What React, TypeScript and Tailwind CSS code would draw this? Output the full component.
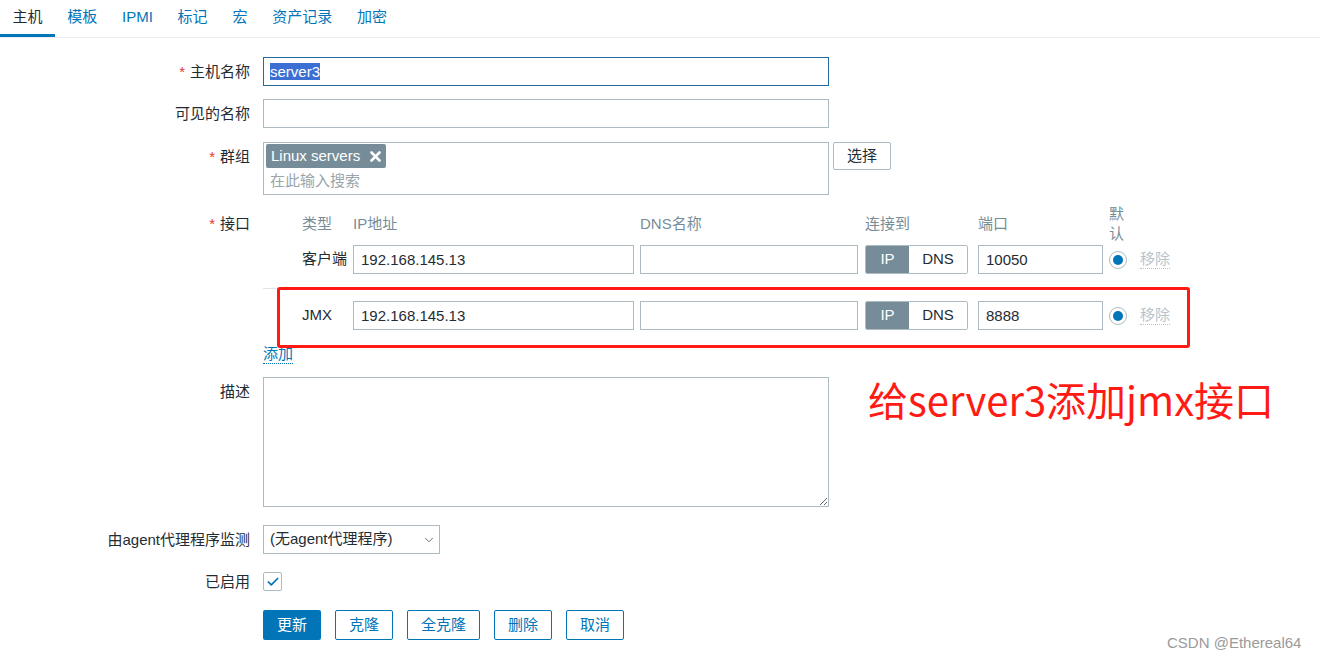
import { Check, ChevronDown } from "lucide-react";

const tabs = ["主机", "模板", "IPMI", "标记", "宏", "资产记录", "加密"];

const font = "font-['Liberation_Sans','Noto_Sans_CJK_SC',sans-serif]";

function Label({
  text,
  required,
  className = "",
  lead = "leading-[29px]",
}: {
  text: string;
  required?: boolean;
  className?: string;
  lead?: string;
}) {
  return (
    <div className={`w-[250px] shrink-0 text-right text-[#1f2c33] ${lead} ${className}`}>
      {required && <span className="text-[#e33734] mr-[5px]">*</span>}
      {text}
    </div>
  );
}

function Field({ value, className = "" }: { value?: string; className?: string }) {
  return (
    <div
      className={`h-[29px] border border-[#acbbc2] bg-white px-[7px] leading-[27px] text-[#1f2c33] whitespace-nowrap overflow-hidden ${className}`}
    >
      {value}
    </div>
  );
}

function InterfaceRow({ type, ip, port }: { type: string; ip: string; port: string }) {
  return (
    <div className="flex items-center h-[29px] pl-[39px]">
      <div className="w-[51px] shrink-0 text-[#1f2c33]">{type}</div>
      <Field value={ip} className="w-[281px]" />
      <Field className="w-[218px] ml-[6px]" />
      <div className="ml-[7px] flex h-[29px] w-[103px] rounded-[2px] border border-[#acbbc2] overflow-hidden">
        <div className="w-[43px] bg-[#768d99] text-white flex items-center justify-center">IP</div>
        <div className="flex-1 bg-white text-[#1f2c33] flex items-center justify-center">DNS</div>
      </div>
      <Field value={port} className="w-[125px] ml-[10px]" />
      <div className="ml-[6px] w-[18px] h-[18px] rounded-full border border-[#acbbc2] flex items-center justify-center">
        <div className="w-[10px] h-[10px] rounded-full bg-[#0275b8]" />
      </div>
      <span className="ml-[13px] text-[#b8c4ca] border-b border-dotted border-[#b8c4ca] leading-[18px]">移除</span>
    </div>
  );
}

export default function App() {
  return (
    <div className={`relative w-[1320px] h-[657px] overflow-hidden bg-white text-[15px] ${font}`}>
      {/* tabs */}
      <div className="flex h-[38px] border-b border-[#ebeef0]">
        {tabs.map((t, i) => (
          <div
            key={t}
            className={`h-full px-[12.4px] flex items-center border-b-[3px] ${
              i === 0 ? "border-[#0275b8] text-[#1f2c33]" : "border-transparent text-[#0275b8]"
            }`}
          >
            {t}
          </div>
        ))}
      </div>

      <div className="flex flex-col pt-[19px]">
        <div className="flex">
          <Label text="主机名称" required />
          <div className="ml-[13px] w-[566px] h-[29px] border border-[#236aa0] px-[6px] flex items-center">
            <span className="bg-[#3b6fd4] text-white leading-[17px]">server3</span>
          </div>
        </div>

        <div className="flex mt-[13px]">
          <Label text="可见的名称" />
          <Field className="ml-[13px] w-[566px]" />
        </div>

        <div className="flex mt-[14px]">
          <Label text="群组" required />
          <div className="ml-[13px] w-[566px] h-[53px] border border-[#acbbc2] pl-[2px] pt-[1px]">
            <div className="inline-flex items-center h-[24px] rounded-[2px] bg-[#768d99] text-white pl-[5px] pr-[5px]">
              Linux servers
              <svg width="11" height="11" viewBox="0 0 11 11" className="ml-[10px]">
                <path d="M1.5 1.5 L9.5 9.5 M9.5 1.5 L1.5 9.5" stroke="white" strokeWidth="2.6" strokeLinecap="round" />
              </svg>
            </div>
            <div className="pl-[4px] leading-[26px] text-[#9aa5ab]">在此输入搜索</div>
          </div>
          <div className="ml-[4px] w-[58px] h-[28px] rounded-[2px] border border-[#acbbc2] flex items-center justify-center text-[#1f2c33]">
            选择
          </div>
        </div>

        <div className="flex mt-[11px]">
          <Label text="接口" required className="mt-[3px]" />
          <div className="ml-[13px] w-[927px]">
            <div className="flex items-center h-[36px] pl-[39px] text-[#768d99]">
              <div className="w-[51px]">类型</div>
              <div className="w-[287px]">IP地址</div>
              <div className="w-[225px]">DNS名称</div>
              <div className="w-[113px]">连接到</div>
              <div className="w-[131px]">端口</div>
              <div className="w-[18px] leading-[20px]">默认</div>
            </div>
            <div className="mt-[3px] pb-[14px] border-b border-[#dfe4e7]">
              <InterfaceRow type="客户端" ip="192.168.145.13" port="10050" />
            </div>
            <div className="mt-[12px]">
              <InterfaceRow type="JMX" ip="192.168.145.13" port="8888" />
            </div>
            <div className="mt-[15px] flex">
              <span className="text-[#0275b8] leading-[18px] border-b border-dotted border-[#0275b8]">添加</span>
            </div>
          </div>
        </div>

        <div className="flex mt-[13px]">
          <Label text="描述" />
          <textarea
            readOnly
            className="ml-[13px] w-[566px] h-[130px] border border-[#acbbc2] outline-none"
          />
        </div>

        <div className="flex mt-[18px]">
          <Label text="由agent代理程序监测" />
          <div className="ml-[13px] w-[177px] h-[29px] border border-[#acbbc2] pl-[6px] pr-[3px] flex items-center justify-between text-[#1f2c33]">
            <span>(无agent代理程序)</span>
            <ChevronDown size={14} strokeWidth={1.5} color="#4d5b63" />
          </div>
        </div>

        <div className="flex mt-[18px]">
          <Label text="已启用" lead="leading-[19px]" />
          <div className="ml-[13px] w-[19px] h-[19px] rounded-[2px] border border-[#acbbc2] flex items-center justify-center">
            <Check size={14} strokeWidth={3} color="#0275b8" />
          </div>
        </div>

        <div className="flex mt-[19px] pl-[263px] gap-[14px]">
          <div className="w-[58px] h-[30px] rounded-[2px] bg-[#0275b8] text-white flex items-center justify-center">更新</div>
          {[
            ["克隆", "w-[58px]"],
            ["全克隆", "w-[73px]"],
            ["删除", "w-[58px]"],
            ["取消", "w-[58px]"],
          ].map(([t, w]) => (
            <div
              key={t}
              className={`${w} h-[30px] rounded-[2px] border border-[#0275b8] text-[#0275b8] flex items-center justify-center`}
            >
              {t}
            </div>
          ))}
        </div>
      </div>

      {/* annotation overlay */}
      <div className="absolute left-[277px] top-[287px] w-[913px] h-[61px] border-[3px] border-[#ff1a14] rounded-[3px]" />
      <div className="absolute left-[868px] top-[379px] text-[40px] leading-none text-[#ff1a14] font-['Noto_Sans_CJK_SC',sans-serif] whitespace-nowrap">
        给server3添加jmx接口
      </div>
      <div className="absolute left-[1167px] top-[632px] text-[15px] text-[#9a9a9a] font-['Liberation_Sans',sans-serif]">
        CSDN @Ethereal64
      </div>
    </div>
  );
}
